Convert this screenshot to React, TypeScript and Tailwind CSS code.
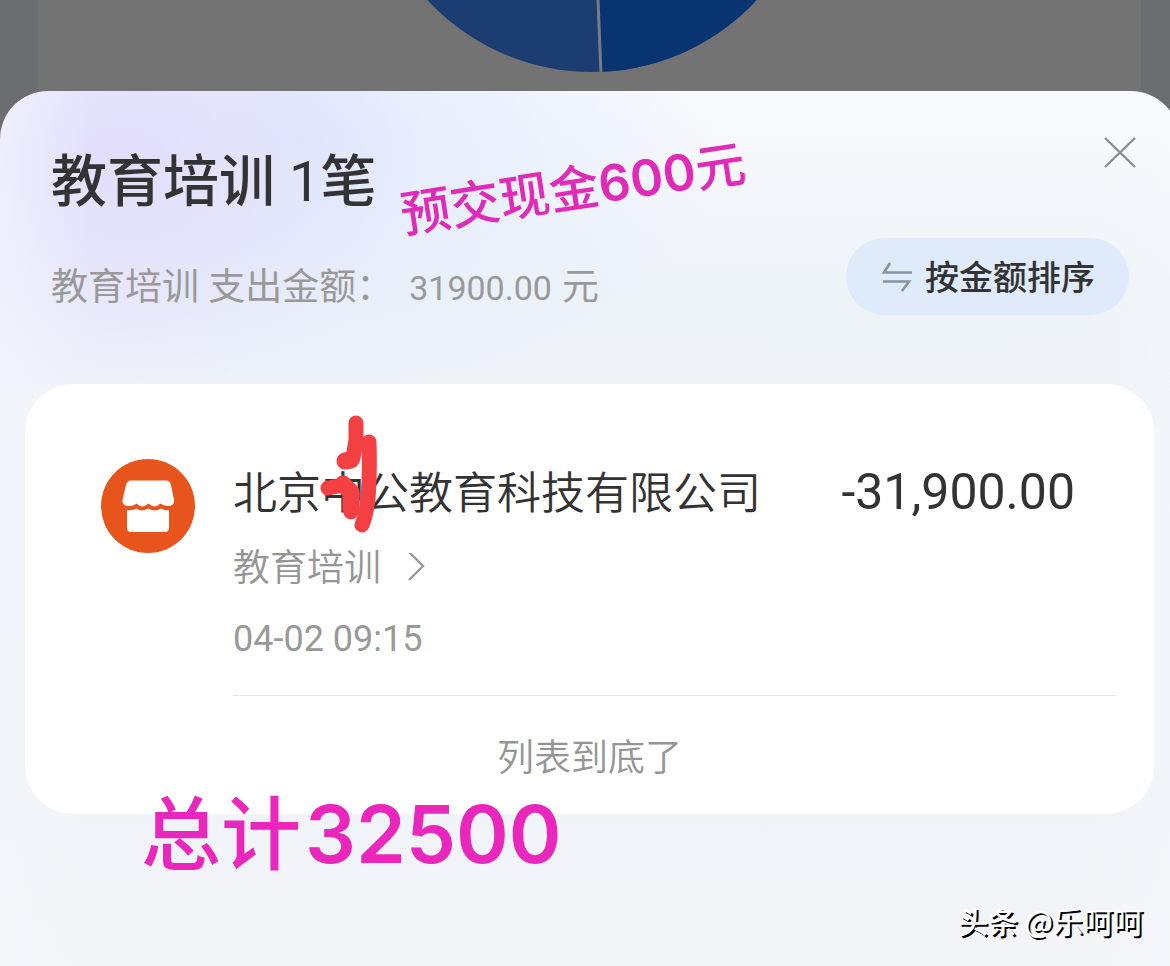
import React from 'react';

interface Bill {
  id: number;
  company: string;
  category: string;
  time: string;
  amount: string;
}

const bills: Bill[] = [
  { id: 1, company: '北京中公教育科技有限公司', category: '教育培训', time: '04-02 09:15', amount: '-31,900.00' },
];

const PieChart: React.FC = () => (
  <svg className="ml-1 h-[74px] w-[370px] shrink-0" viewBox="0 0 370 74" aria-hidden="true">
    <clipPath id="pie">
      <circle cx="185" cy="-152" r="224" />
    </clipPath>
    <g clipPath="url(#pie)">
      <rect width="370" height="74" fill="#1b3d72" />
      <path d="M191 0 H370 V74 H194 Z" fill="#083472" />
      <path d="M191 0 L194 74" stroke="#777d84" strokeWidth="3" />
    </g>
  </svg>
);

const CloseIcon: React.FC = () => (
  <svg className="size-8" viewBox="0 0 32 32" fill="none" stroke="#8b8d91" strokeWidth="2.4">
    <path d="M1 1 L31 30 M31 1 L1 30" />
  </svg>
);

const SortIcon: React.FC = () => (
  <svg className="h-[30px] w-8" viewBox="0 0 32 30" fill="none" stroke="#8a929d" strokeWidth="2.6">
    <path d="M9 1 L3 10.5 H31" />
    <path d="M2 19.5 H28 L21 29" />
  </svg>
);

const ShopIcon: React.FC = () => (
  <svg className="size-[94px] shrink-0" viewBox="0 0 94 94" aria-hidden="true">
    <circle cx="47" cy="47" r="47" fill="#e8551c" />
    <path
      d="M30 21.5 H65 Q69 21.5 70 26 L73 41 Q73.5 47 67 47 Q62 46.5 59.5 44.5 Q57 47 53.5 47.5 Q50 47 47.5 44.5 Q44 47.5 41 47.5 Q38 47 35.5 44.5 Q32 47.5 28 47 Q21 47 21.5 41 L25 26 Q26 21.5 30 21.5 Z"
      fill="#fff"
    />
    <path
      d="M26 51 Q32 52 35.5 49.5 Q40 53.5 47.5 49.5 Q54 53.5 60 49.5 Q64 52 68 51 V69 Q68 73 64 73 H30 Q26 73 26 69 Z"
      fill="#fff"
    />
  </svg>
);

const Scribble: React.FC = () => (
  <svg
    className="pointer-events-none absolute -top-[49px] left-[87px] h-[122px] w-[60px]"
    viewBox="0 0 60 122"
    fill="none"
    stroke="#f44043"
    strokeLinecap="round"
    strokeLinejoin="round"
    aria-hidden="true"
  >
    <path d="M36 9 L36 26 L33 44" strokeWidth="15" />
    <path d="M31 46 L25 47" strokeWidth="17" />
    <path d="M39 26 L48 28" strokeWidth="8" />
    <path d="M49 28 Q50 60 48 84 Q46 102 42 111" strokeWidth="15" />
    <path d="M8 74 L24 71 L32 80 L31 98" strokeWidth="15" />
    <path d="M23 70 L31 78 L31 95" strokeWidth="17" />
  </svg>
);

const BillRow: React.FC<{ bill: Bill }> = ({ bill }) => (
  <li className="flex gap-[38px]">
    <ShopIcon />
    <div className="min-w-0 flex-1 border-b border-[#e6e6e6] pt-1 pb-8">
      <div className="relative flex items-start justify-between pr-[41px] text-[#333333]">
        <h3 className="text-[44px] leading-[62px] font-[350] whitespace-nowrap">{bill.company}</h3>
        <span className="text-[50px] leading-[58px]">{bill.amount}</span>
        <Scribble />
      </div>
      <button className="mt-5 flex items-center gap-[25px] text-[37px] leading-[48px] font-[350] text-[#959595]">
        {bill.category}
        <svg className="h-8 w-5" viewBox="0 0 20 32" fill="none" stroke="#999" strokeWidth="2.4">
          <path d="M3 -1 L17 13 L3 27" />
        </svg>
      </button>
      <p className="mt-[22px] text-[36px] leading-[48px] text-[#999999]">{bill.time}</p>
    </div>
  </li>
);

const App: React.FC = () => {
  return (
    <div className="relative flex min-h-screen flex-col overflow-hidden bg-[#6c6d70] font-[Roboto,'Noto_Sans_CJK_SC',sans-serif]">
      <div className="mr-[29px] -mb-12 ml-[38px] flex h-[139px] justify-center bg-[#737373]">
        <PieChart />
      </div>

      <section
        role="dialog"
        aria-labelledby="sheet-title"
        className="relative -mr-[9px] flex-1 rounded-t-[48px] bg-[#f1f3f8] bg-[linear-gradient(90deg,#f8f9ff66,#f8f9ff00_90px,#f8f9ff00_calc(100%-90px),#f8f9ff66),radial-gradient(ellipse_300px_250px_at_120px_70px,#e2dcfbee,#e2dcfb00),radial-gradient(ellipse_420px_260px_at_300px_50px,#e0eafd,#e0eafd00),linear-gradient(180deg,#f9fafd,#eef3f8_200px,#eff3f8_340px,#f0f3f7_730px,#f3f5f9)]"
      >
        <header className="flex justify-between pr-[43px] pb-[69px] pl-[51px]">
          <div className="pt-[51px]">
            <h1 id="sheet-title" className="text-[56px] leading-[80px] font-medium text-[#333333]">
              教育培训 <span className="font-normal">1</span>笔
            </h1>
            <p className="mt-[42px] flex text-[37px] leading-[48px] text-[#999999]">
              <span>教育培训 支出金额：</span>
              <span className="ml-4 text-[34px]">31900.00</span>
              <span className="ml-[10px]">元</span>
            </p>
          </div>
          <div className="flex flex-col items-end pt-[46px]">
            <button aria-label="关闭">
              <CloseIcon />
            </button>
            <button className="mt-[69px] mr-[7px] flex h-[77px] items-center gap-3 rounded-full bg-[#dfeafa] pr-[34px] pl-[35px] text-[34px] font-medium text-[#333333]">
              <SortIcon />
              <span className="pt-1">按金额排序</span>
            </button>
          </div>
        </header>

        <main className="mx-[25px] rounded-[48px] bg-white pt-[75px]">
          <ul className="pr-[38px] pl-[76px]">
            {bills.map((bill) => (
              <BillRow key={bill.id} bill={bill} />
            ))}
          </ul>
          <p className="pt-[38px] pb-[30px] text-center text-[37px] leading-[50px] font-[350] text-[#959595]">列表到底了</p>
        </main>
      </section>

      {/* notes written over the sheet */}
      <p className="absolute top-[151px] left-[399px] -rotate-[8.7deg] text-[50px] leading-[76px] font-medium whitespace-nowrap text-[#e02bb8]">
        预交现金<span className="font-[Inter] font-semibold">600</span>元
      </p>
      <p className="absolute top-[776px] left-[141px] text-[80px] leading-[116px] font-medium whitespace-nowrap text-[#ea27bd]">
        总计<span className="ml-1 font-[Inter] font-semibold">32500</span>
      </p>
      <p className="absolute right-[27px] bottom-6 font-['Noto_Sans_CJK_SC',sans-serif] text-[30px] leading-[44px] text-white [text-shadow:2px_2px_0_#000]">
        <span className="font-medium">头条</span> @乐呵呵
      </p>
    </div>
  );
};

export default App;
